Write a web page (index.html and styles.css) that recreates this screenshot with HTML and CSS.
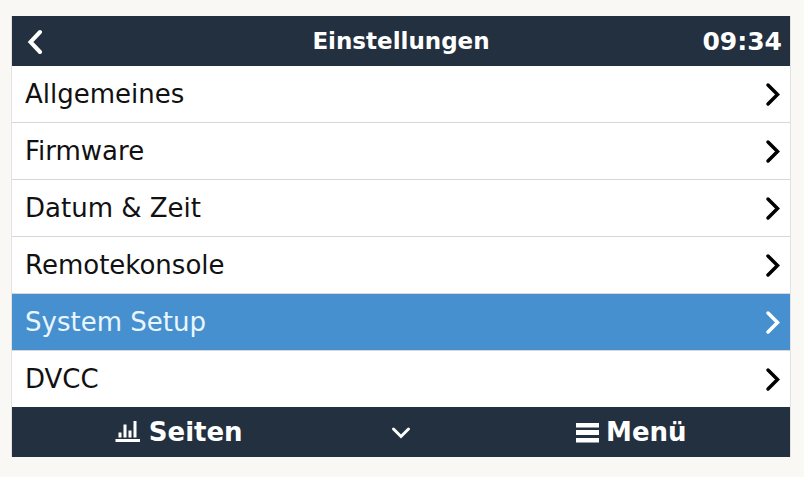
FILE: index.html
```html
<!DOCTYPE html>
<html lang="de">
<head>
    <meta charset="UTF-8">
    <meta name="viewport" content="width=device-width, initial-scale=1.0">
    <title>Einstellungen</title>
    <link rel="stylesheet" href="styles.css">
</head>
<body>
    <svg class="symbols" width="0" height="0" aria-hidden="true">
        <symbol id="chevron" viewBox="0 0 16 26">
            <path d="M3 4 L12.5 13.500 L3 23" fill="none" stroke="currentColor" stroke-width="3.5" stroke-linecap="round"/>
        </symbol>
    </svg>
    <div class="panel">
        <header class="bar header">
            <button class="back" type="button" aria-label="Zurück">
                <svg width="18" height="26" viewBox="0 0 18 26"><path d="M14 4 L4.500 14 L14 24" fill="none" stroke="currentColor" stroke-width="4" stroke-linecap="round"/></svg>
            </button>
            <h1>Einstellungen</h1>
            <time>09:34</time>
        </header>
        <main>
            <nav class="menu">
                <a href="#allgemeines">Allgemeines <svg class="chevron"><use href="#chevron"/></svg></a>
                <a href="#firmware">Firmware <svg class="chevron"><use href="#chevron"/></svg></a>
                <a href="#datum">Datum &amp; Zeit <svg class="chevron"><use href="#chevron"/></svg></a>
                <a href="#remote">Remotekonsole <svg class="chevron"><use href="#chevron"/></svg></a>
                <a href="#system" class="active">System Setup <svg class="chevron"><use href="#chevron"/></svg></a>
                <a href="#dvcc">DVCC <svg class="chevron"><use href="#chevron"/></svg></a>
            </nav>
        </main>
        <footer class="bar footer">
            <button type="button">
                <svg width="26" height="24" viewBox="0 0 26 24" fill="currentColor"><path d="M0.500 19h24.500v3H0.500zM3.500 12.500h3v5h-3zM8.500 4.500h3v13h-3zM13.500 10.500h3v7h-3zM18.500 1h3v16.500h-3z"/></svg>
                Seiten
            </button>
            <button type="button" aria-label="Nach unten">
                <svg width="22" height="16" viewBox="0 0 22 16"><path d="M3.500 5 L11 12.500 L18.500 5" fill="none" stroke="currentColor" stroke-width="3" stroke-linecap="round"/></svg>
            </button>
            <button class="menu-button" type="button">
                <svg width="24" height="24" viewBox="0 0 24 24" fill="currentColor"><path d="M0 3h23v4.500H0zM0 10h23v5H0zM0 18h23v4.500H0z"/></svg>
                Menü
            </button>
        </footer>
    </div>
</body>
</html>
```
FILE: styles.css
```css
*{
    box-sizing: border-box;
    padding: 0;
    margin: 0;
}
body{
    background-color: #faf8f4;
    font-family: "DejaVu Sans", sans-serif;
    font-size: 26px;
    padding: 16px 13px 20px 11px;
}
.symbols{
    position: absolute;
}
.panel{
    border: solid #e3e3e3;
    border-width: 0 1px;
}
.bar{
    display: grid;
    align-items: center;
    height: 50px;
    background-color: #22303f;
    color: #fff;
}
.bar button{
    display: flex;
    align-items: center;
    justify-content: center;
    gap: 8px;
    background: none;
    border: none;
    color: inherit;
    font: inherit;
    font-weight: bold;
    cursor: pointer;
}
.header{
    grid-template-columns: 1fr auto 1fr;
    padding: 0 8px;
}
.header .back{
    justify-self: start;
    padding-left: 6px;
}
.header h1{
    font-size: 23px;
}
.header time{
    justify-self: end;
    font-size: 25px;
    font-weight: bold;
}
.menu{
    display: grid;
    gap: 1px;
    background-color: #d8d8d8;
}
.menu a{
    display: flex;
    align-items: center;
    justify-content: space-between;
    height: 56px;
    padding: 0 9px 0 13px;
    background-color: #fff;
    color: #111;
    text-decoration: none;
}
.menu .active{
    background-color: #4790d0;
    color: #e9f6ff;
}
.chevron{
    width: 16px;
    height: 26px;
    color: #000;
}
.active .chevron{
    color: #fff;
}
.footer{
    grid-template-columns: 3fr 1fr 3fr;
}
.bar .menu-button{
    gap: 6px;
    padding-left: 16px;
}
```
